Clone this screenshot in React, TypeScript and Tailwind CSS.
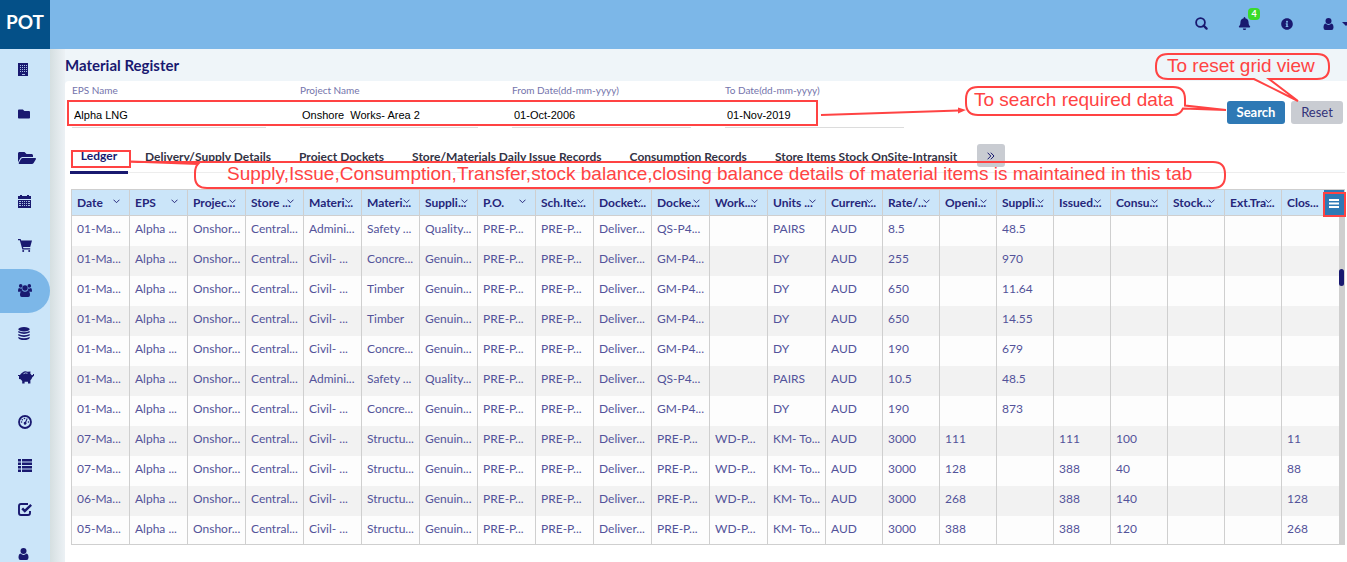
import React from 'react';
import { FaBell, FaFolder, FaFolderOpen, FaInfoCircle } from 'react-icons/fa';

const Building = () => (
  <svg viewBox="0 0 10 13" width="10" height="13" fill="currentColor">
    <path d="M0 0h10v13H0z" />
    <path fill="#a9bfe2" d="M2 2h1v1H2zm2 0h1v1H4zm2 0h1v1H6zm2 0h1v1H8zM2 4h1v1H2zm2 0h1v1H4zm2 0h1v1H6zm2 0h1v1H8zM2 6h1v1H2zm2 0h1v1H4zm2 0h1v1H6zm2 0h1v1H8zM2 8h1v1H2zm2 0h1v1H4zm2 0h1v1H6zm2 0h1v1H8zM4 11h3v1H4z" />
  </svg>
);

const Calendar = () => (
  <svg viewBox="0 0 13 13" width="13" height="13" fill="currentColor">
    <path d="M0 1h2V0h2v1h5V0h2v1h2v3H0zM0 5h13v8H0z" />
    <path fill="#a9bfe2" d="M1 6h2v1H1zm3 0h1v1H4zm2 0h1v1H6zm2 0h1v1H8zm2 0h2v1h-2zM1 8h2v1H1zm3 0h1v1H4zm2 0h1v1H6zm2 0h1v1H8zm2 0h2v1h-2zM1 10h2v1H1zm3 0h1v1H4zm2 0h1v1H6zm2 0h1v1H8zm2 0h2v1h-2z" />
  </svg>
);

const Cart = () => (
  <svg viewBox="0 0 14 13" width="14" height="13" fill="currentColor">
    <path d="M0 0h2.600l.6 1.500H14L12.200 8H5l.4 1.200h6.800v1.300H4.400L1.800 1.300H0z" />
    <circle cx="5.200" cy="12" r="1" />
    <circle cx="11.200" cy="12" r="1" />
  </svg>
);

const Team = () => (
  <svg viewBox="0 0 14 13" width="14" height="13" fill="currentColor">
    <circle cx="2.700" cy="1.900" r="1.800" />
    <circle cx="11.300" cy="1.900" r="1.800" />
    <circle cx="7" cy="4" r="2.700" />
    <path d="M0 7.500Q0 4 1.200 3.900q1.400.9 2.400.4Q3.700 5.800 4.600 6.400 3 6.500 2.400 7.700H1Q0 7.700 0 7.500zM14 7.500q0-3.500-1.200-3.600-1.400.9-2.400.4Q10.300 5.800 9.400 6.400q1.600.1 2.200 1.300H13q1 0 1-.2zM4.400 6.800Q7 8.600 9.600 6.800 12 7 12 11q0 2-1.800 2H3.800Q2 13 2 11 2 7 4.400 6.800z" />
  </svg>
);

const Coins = () => (
  <svg viewBox="0 0 12 13" width="12" height="13" fill="currentColor">
    <ellipse cx="6" cy="2.200" rx="5.700" ry="2.200" />
    <path d="M.3 4Q6 6.600 11.700 4v1.600Q6 8.400.3 5.600zM.3 7Q6 9.600 11.700 7v1.600Q6 11.400.3 8.600zM.3 10Q6 12.600 11.700 10v1Q10.500 13 6 13T.3 11z" />
  </svg>
);

const Piggy = () => (
  <svg viewBox="0 0 16 13" width="16" height="13" fill="currentColor">
    <path d="M4.500 1.500Q7-.6 9.500.8L12.500.6 12.300 2.400Q13.200 3.300 13.700 4.300L15 4V3h1v1.800L14.300 6.200Q13.700 8.300 12.400 9.300V12.500H10V10.800H6.600V12.500H4.200V10L2.600 8.200 1 8V5H0V4H2Q2.600 2.600 4.500 1.500z" />
    <path d="M5.500 2.700Q7.500 1.300 9.500 2.300" fill="none" stroke="#cbe5f9" strokeWidth=".8" />
  </svg>
);

const Gauge = () => (
  <svg viewBox="0 0 14 14" width="14" height="14" fill="currentColor">
    <circle cx="7" cy="7" r="6" fill="none" stroke="currentColor" strokeWidth="1.800" />
    <circle cx="6.500" cy="3.500" r=".8" />
    <circle cx="4.300" cy="4.700" r=".8" />
    <circle cx="3.500" cy="7" r=".8" />
    <circle cx="10.500" cy="7" r=".8" />
    <path d="M8.800 3.300l.9.500-1.500 3.500a1.400 1.400 0 1 1-1-.5z" />
  </svg>
);

const ListRows = () => (
  <svg viewBox="0 0 14 13" width="14" height="13" fill="currentColor">
    <path d="M0 0h3v2.500H0zM4 0h10v2.500H4zM0 3.500h3V6H0zM4 3.500h10V6H4zM0 7h3v2.500H0zM4 7h10v2.500H4zM0 10.500h3V13H0zM4 10.500h10V13H4z" />
  </svg>
);

const CheckBoxMark = () => (
  <svg viewBox="0 0 14 13" width="14" height="13" fill="none" stroke="currentColor">
    <path strokeWidth="1.900" d="M10 1H3Q1 1 1 3v7q0 2 2 2h7q2 0 2-2V8" />
    <path strokeWidth="2.500" d="M4.200 5.300l2.600 2.700L13.200 1.800" />
  </svg>
);

const Person = () => (
  <svg viewBox="0 0 10 12" width="11" height="12" fill="currentColor">
    <circle cx="5" cy="3" r="3" />
    <path d="M2 5.500Q5 8.300 8 5.500 10 6 10 9.500 10 12 8 12H2Q0 12 0 9.500 0 6 2 5.500z" />
  </svg>
);

const Magnifier = () => (
  <svg viewBox="0 0 13 13" width="13" height="13" fill="none" stroke="currentColor">
    <circle cx="5.500" cy="5.500" r="4.400" strokeWidth="1.800" />
    <path d="M8.600 8.600l3 3" strokeWidth="2.200" strokeLinecap="round" />
  </svg>
);

const Chevron = () => (
  <svg className="absolute right-[9px] top-[9px] text-[#191970]" viewBox="0 0 7 5" width="7" height="5" fill="none" stroke="currentColor">
    <path d="M.5.700l3 3 3-3" strokeWidth=".9" />
  </svg>
);

const nav: { label: string; icon: React.ReactNode; active?: boolean }[] = [
  { label: 'Companies', icon: <Building /> },
  { label: 'Files', icon: <FaFolder className="h-3 w-3" /> },
  { label: 'Projects', icon: <FaFolderOpen className="h-4 w-[18px]" /> },
  { label: 'Calendar', icon: <Calendar /> },
  { label: 'Procurement', icon: <Cart /> },
  { label: 'Teams', icon: <Team />, active: true },
  { label: 'Costs', icon: <Coins /> },
  { label: 'Finance', icon: <Piggy /> },
  { label: 'Dashboard', icon: <Gauge /> },
  { label: 'Lists', icon: <ListRows /> },
  { label: 'Approvals', icon: <CheckBoxMark /> },
  { label: 'Profile', icon: <Person /> },
];

const fields = [
  { id: 'eps', label: 'EPS Name', value: 'Alpha LNG' },
  { id: 'project', label: 'Project Name', value: 'Onshore  Works- Area 2' },
  { id: 'from', label: 'From Date(dd-mm-yyyy)', value: '01-Oct-2006' },
  { id: 'to', label: 'To Date(dd-mm-yyyy)', value: '01-Nov-2019' },
];

const tabs = [
  'Delivery/Supply Details',
  'Project Dockets',
  'Store/Materials Daily Issue Records',
  'Consumption Records',
  'Store Items Stock OnSite-Intransit',
];

const columns = [
  'Date', 'EPS', 'Projec...', 'Store ...', 'Materi...', 'Materi...', 'Suppli...', 'P.O.', 'Sch.Ite...', 'Docket...', 'Docke...',
  'Work....', 'Units ...', 'Curren...', 'Rate/...', 'Openi...', 'Suppli...', 'Issued...', 'Consu...', 'Stock...', 'Ext.Tra...', 'Clos...',
];

const row = (
  date: string, type: string, item: string, supplier: string, docket: string, work: string, unit: string, rate: string,
  opening: string, supplied: string, issued: string, consumed: string, closing: string,
) => [
  date, 'Alpha ...', 'Onshor...', 'Central...', type, item, supplier, 'PRE-P...', 'PRE-P...', 'Deliver...', docket,
  work, unit, 'AUD', rate, opening, supplied, issued, consumed, '', '', closing,
];

const rows = [
  row('01-Ma...', 'Admini...', 'Safety ...', 'Quality...', 'QS-P4...', '', 'PAIRS', '8.5', '', '48.5', '', '', ''),
  row('01-Ma...', 'Civil- ...', 'Concre...', 'Genuin...', 'GM-P4...', '', 'DY', '255', '', '970', '', '', ''),
  row('01-Ma...', 'Civil- ...', 'Timber', 'Genuin...', 'GM-P4...', '', 'DY', '650', '', '11.64', '', '', ''),
  row('01-Ma...', 'Civil- ...', 'Timber', 'Genuin...', 'GM-P4...', '', 'DY', '650', '', '14.55', '', '', ''),
  row('01-Ma...', 'Civil- ...', 'Concre...', 'Genuin...', 'GM-P4...', '', 'DY', '190', '', '679', '', '', ''),
  row('01-Ma...', 'Admini...', 'Safety ...', 'Quality...', 'QS-P4...', '', 'PAIRS', '10.5', '', '48.5', '', '', ''),
  row('01-Ma...', 'Civil- ...', 'Concre...', 'Genuin...', 'GM-P4...', '', 'DY', '190', '', '873', '', '', ''),
  row('07-Ma...', 'Civil- ...', 'Structu...', 'Genuin...', 'PRE-P...', 'WD-P...', 'KM- To...', '3000', '111', '', '111', '100', '11'),
  row('07-Ma...', 'Civil- ...', 'Structu...', 'Genuin...', 'PRE-P...', 'WD-P...', 'KM- To...', '3000', '128', '', '388', '40', '88'),
  row('06-Ma...', 'Civil- ...', 'Structu...', 'Genuin...', 'PRE-P...', 'WD-P...', 'KM- To...', '3000', '268', '', '388', '140', '128'),
  row('05-Ma...', 'Civil- ...', 'Structu...', 'Genuin...', 'PRE-P...', 'WD-P...', 'KM- To...', '3000', '388', '', '388', '120', '268'),
];

function TopBar() {
  return (
    <header className="flex h-[49px] shrink-0 bg-[#7cb7e8] text-[#191970]">
      <a href="#home" className="flex w-[50px] items-center justify-center bg-[#045088] pb-1 text-[19px] font-bold text-white">POT</a>
      <div className="ml-auto flex items-center pb-0.5">
        <button aria-label="Search site" className="mr-[30px]"><Magnifier /></button>
        <button aria-label="Notifications" className="relative mr-[30px]">
          <FaBell className="h-[13px] w-[13px]" />
          <span className="absolute -top-[9px] left-[10px] flex h-3 w-3 items-center justify-center rounded-sm bg-[#3adb2a] text-[9px] font-bold text-white">4</span>
        </button>
        <button aria-label="Information" className="mr-[30px]"><FaInfoCircle className="h-3 w-3" /></button>
        <button aria-label="Account" className="flex items-center gap-2">
          <Person />
          <svg width="5" height="4" viewBox="0 0 5 4" fill="currentColor"><path d="M0 0h8L4 4z" /></svg>
        </button>
      </div>
    </header>
  );
}

function Sidebar() {
  return (
    <nav className="w-[50px] shrink-0 overflow-hidden bg-[#cbe5f9] text-[#191970]">
      {nav.map((n) => (
        <a
          key={n.label}
          href={'#' + n.label.toLowerCase()}
          aria-label={n.label}
          className={n.active ? 'flex h-11 items-center rounded-r-full bg-[#7cb7e8] pb-px pl-[18px]' : 'flex h-11 items-center pb-[3px] pl-[18px]'}
        >
          {n.icon}
        </a>
      ))}
    </nav>
  );
}

function Filters() {
  return (
    <form className="flex pl-[7px]" onSubmit={(e) => e.preventDefault()}>
      <div className="grid flex-1 grid-cols-[194fr_178fr_179fr_179fr] gap-[34px]">
        {fields.map((f) => (
          <div key={f.id} className="flex min-w-0 flex-col pt-px">
            <label htmlFor={f.id} className="text-[10px] leading-4 text-[#7474ab]">{f.label}</label>
            <input
              id={f.id}
              defaultValue={f.value}
              className="h-[30px] w-full border-b border-[#dcdcdc] bg-transparent px-0.5 pt-1 font-['Liberation_Sans',sans-serif] text-[11px] text-black outline-none"
            />
          </div>
        ))}
      </div>
      <div className="flex w-[443px] shrink-0 items-start justify-end gap-1.5 pr-1 pt-5 text-[13px]">
        <button type="submit" className="h-[23px] w-[58px] rounded-[3px] bg-[#2e79b5] font-bold text-white">Search</button>
        <button type="reset" className="h-[23px] w-[52px] rounded-[3px] bg-[#c9ccd2] text-[#33337a]">Reset</button>
      </div>
    </form>
  );
}

function Tabs() {
  return (
    <div className="ml-[5px] mr-0.5 mt-[15px] flex h-[30px] border-b border-[#ededed] text-xs font-bold text-[#333344]">
      <button className="h-[31px] w-[58px] border-b-[3px] border-[#191970] pb-0.5 text-[#191970]">Ledger</button>
      <div className="flex gap-[28px] pb-0.5 pl-[17px]">
        {tabs.map((t) => (
          <button key={t} className="whitespace-nowrap">{t}</button>
        ))}
      </div>
      <button aria-label="More tabs" className="ml-5 mt-px flex h-[23px] w-7 items-center justify-center rounded-[3px] bg-[#c9ccd2] text-[#191970]">
        <svg width="8" height="8" viewBox="0 0 8 8" fill="none" stroke="currentColor"><path d="M.6.700L3.800 4 .6 7.300M3.800.700L7 4 3.800 7.300" /></svg>
      </button>
    </div>
  );
}

function Grid() {
  return (
    <div className="relative ml-1.5 mr-0.5 mt-4 flex h-[356px] overflow-hidden border border-[#cfcfcf] bg-[#cbe5f9]">
      <div className="min-w-0 flex-1">
        <table className="w-full table-fixed border-separate border-spacing-0 text-left text-xs text-[#53539a]">
          <colgroup>
            <col span={13} className="w-[58px]" />
            <col span={9} className="w-[57px]" />
          </colgroup>
          <thead>
            <tr className="h-[26px] bg-[#cbe5f9]">
              {columns.map((c, i) => (
                <th key={i} className="relative whitespace-nowrap border-b border-r border-[#cfcfcf] py-0 pl-[5px] pr-0 leading-4 text-[#26267a] last:border-r-0">
                  {c}
                  <Chevron />
                </th>
              ))}
            </tr>
          </thead>
          <tbody>
            {rows.map((r, i) => (
              <tr key={i} className="h-[30px] bg-[#fdfdfd] even:bg-[#f2f2f2]">
                {r.map((v, j) => (
                  <td key={j} className="whitespace-nowrap border-r border-[#cfcfcf] pb-1 pl-[5px] pr-0 pt-0 last:border-r-0">{v}</td>
                ))}
              </tr>
            ))}
          </tbody>
        </table>
      </div>
      <div className="mt-[26px] w-[5px] bg-[#cfcfcf] pt-[53px]">
        <div className="h-[17px] rounded-sm bg-[#191970]" />
      </div>
      <button aria-label="Grid menu" className="absolute right-0 top-0 flex h-[26px] w-5 items-center justify-center bg-[#2e79b5]">
        <svg width="10" height="9" viewBox="0 0 10 9" fill="white"><path d="M0 0h10v2H0zM0 3.500h10v2H0zM0 7h10v2H0z" /></svg>
      </button>
    </div>
  );
}

function Callouts() {
  return (
    <div className="pointer-events-none absolute left-0 top-0 font-['Liberation_Sans',sans-serif] text-[#ff4343]">
      <svg width="1347" height="562" viewBox="0 0 1347 562" fill="none" stroke="currentColor" strokeWidth="2">
        <rect x="68" y="101" width="749" height="24" />
        <rect x="72" y="151" width="58" height="16" />
        <rect x="1324" y="193" width="21" height="23" />
        <path d="M821 115l138-4.500" />
        <path d="M958 107.500l8 2.500-8 3.500z" fill="currentColor" stroke="none" />
        <path d="M978 87h195q12 0 12 12v6.500l41 4.500-43-1.500q-3 6.500-10 6.500H978q-12 0-12-12V99q0-12 12-12z" />
        <path d="M1168 54h149q12 0 12 12v2q0 11-12 11h-48l29 22-44-22h-86q-12 0-12-11v-2q0-12 12-12z" />
        <path d="M131 161.500l67 2.500q-3 3-3 9v4q0 11 12 11h1006q12 0 12-12v-2q0-12-12-12H131" />
      </svg>
      <p className="absolute left-[974px] top-[88px] whitespace-nowrap text-[19px] leading-6">To search required data</p>
      <p className="absolute left-[1167px] top-[54px] whitespace-nowrap text-[19px] leading-6">To reset grid view</p>
      <p className="absolute left-[227px] top-[162px] whitespace-nowrap text-[19px] leading-6">
        Supply,Issue,Consumption,Transfer,stock balance,closing balance details of material items is maintained in this tab
      </p>
    </div>
  );
}

export default function App() {
  return (
    <div className="relative flex h-screen flex-col overflow-hidden font-['Lato',sans-serif]">
      <TopBar />
      <div className="flex min-h-0 flex-1 bg-[#eff5f9]">
        <Sidebar />
        <div className="w-[15px] shrink-0 bg-linear-to-r from-[#d5dfe1] to-[#ecf1f5]" />
        <main className="flex min-w-0 flex-1 flex-col">
          <h1 className="h-8 text-[15px] font-bold leading-8 text-[#191970]">Material Register</h1>
          <section className="flex-1 rounded-tl bg-white">
            <Filters />
            <Tabs />
            <Grid />
          </section>
        </main>
      </div>
      <Callouts />
    </div>
  );
}
